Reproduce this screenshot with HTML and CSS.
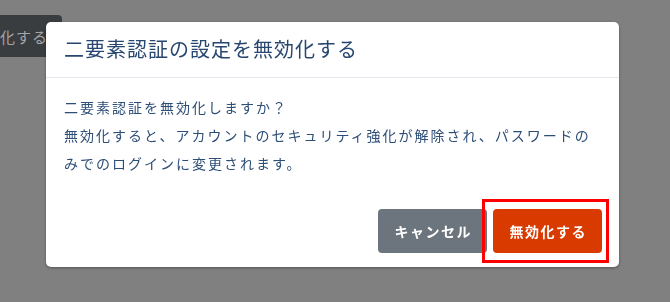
FILE: index.html
```html
<!DOCTYPE html>
<html lang="ja">
<head>
<meta charset="utf-8">
<title>二要素認証の設定を無効化する</title>
<link rel="stylesheet" href="styles.css">
</head>
<body>
<div class="page">
  <button class="bg-btn" type="button">化する</button>
</div>
<div class="overlay">
  <div class="modal" role="dialog" aria-labelledby="mtitle">
    <div class="modal-header">
      <h2 class="modal-title" id="mtitle">二要素認証の設定を無効化する</h2>
    </div>
    <div class="modal-body">
      <p class="msg">二要素認証を無効化しますか？</p>
      <p class="msg">無効化すると、アカウントのセキュリティ強化が解除され、パスワードのみでのログインに変更されます。</p>
    </div>
    <div class="modal-footer">
      <button class="btn btn-cancel" type="button">キャンセル</button>
      <span class="highlight-wrap">
        <button class="btn btn-danger" type="button">無効化する</button>
        <span class="highlight" aria-hidden="true"></span>
      </span>
    </div>
  </div>
</div>
</body>
</html>
```

FILE: styles.css
```css
html, body {
  margin: 0;
  padding: 0;
}
body {
  width: 670px;
  height: 302px;
  overflow: hidden;
  background: #808080;
  font-family: "Noto Sans CJK JP", "Noto Sans", sans-serif;
}
.page {
  padding-top: 15px;
}
.bg-btn {
  display: block;
  margin: 0;
  width: 62px;
  height: 42px;
  border: 0;
  border-radius: 0 4px 4px 0;
  background: #3a3d40;
  color: #a3a5a8;
  font-family: "Noto Sans CJK JP", sans-serif;
  font-size: 15px;
  letter-spacing: 1px;
  text-align: left;
  padding: 0 0 0 0;
  white-space: nowrap;
}
.overlay {
  position: fixed;
  inset: 0;
  padding: 22px 0 0 46px;
}
.modal {
  width: 573px;
  height: 245px;
  box-sizing: border-box;
  background: #fff;
  border-radius: 5px;
  box-shadow: 0 1px 3px rgba(0, 0, 0, 0.35);
  display: flex;
  flex-direction: column;
}
.modal-header {
  height: 56px;
  box-sizing: border-box;
  border-bottom: 1px solid #e3e8ee;
  padding: 0 18px;
  display: flex;
  align-items: center;
}
.modal-title {
  margin: 0;
  font-size: 20px;
  font-weight: 400;
  letter-spacing: 1px;
  color: #284770;
  line-height: 24px;
  padding-bottom: 2px;
}
.modal-body {
  padding: 15px 18px 0 18px;
  height: 116px;
  box-sizing: border-box;
}
.msg {
  margin: 0;
  font-size: 14px;
  letter-spacing: 2px;
  line-height: 28px;
  color: #2d4e76;
}
.modal-footer {
  display: flex;
  justify-content: flex-end;
  gap: 6px;
  padding: 15px 17px 0 0;
}
.btn {
  height: 44px;
  border: 0;
  border-radius: 4px;
  padding: 0 15px 0 16.5px;
  font-family: "Noto Sans CJK JP", sans-serif;
  font-size: 14px;
  font-weight: 700;
  letter-spacing: 1.5px;
  color: #fff;
}
.btn-cancel {
  background: #6c757d;
}
.btn-danger {
  background: #d93a00;
}
.highlight-wrap {
  position: relative;
  display: block;
}
.highlight-wrap .btn {
  display: block;
}
.highlight {
  position: absolute;
  left: -11px;
  right: -7px;
  top: -10px;
  bottom: -10px;
  border: 3px solid #ff0000;
  pointer-events: none;
}
```
